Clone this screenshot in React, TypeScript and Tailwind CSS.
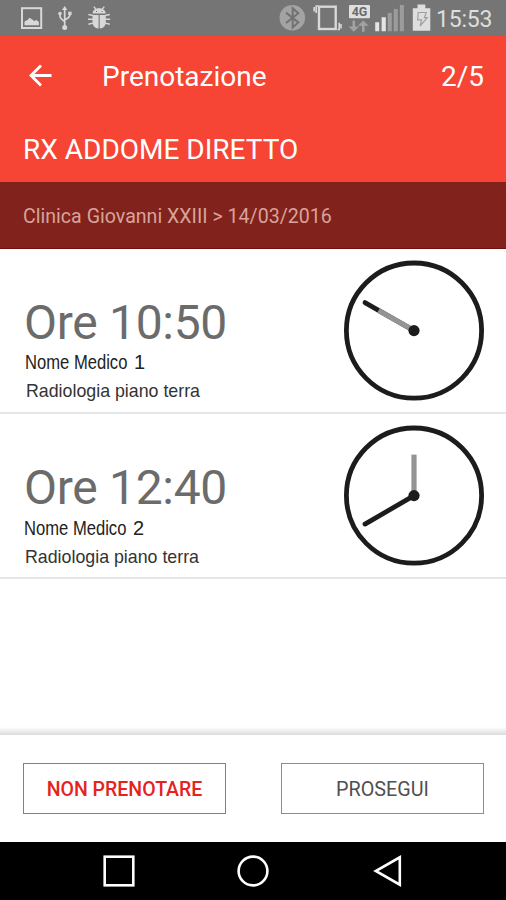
type Appointment = {
  time: string;
  doctor: string;
  number: string;
  place: string;
  detailsClass: string;
  hour: { x: number; y: number };
  minute: { x: number; y: number };
};

const appointments: Appointment[] = [
  {
    time: "Ore 10:50",
    doctor: "Nome Medico",
    number: "1",
    place: "Radiologia piano terra",
    detailsClass: "pl-px",
    hour: { x: 34.5, y: 50 },
    minute: { x: 21, y: 42 },
  },
  {
    time: "Ore 12:40",
    doctor: "Nome Medico",
    number: "2",
    place: "Radiologia piano terra",
    detailsClass: "pt-px",
    hour: { x: 70, y: 29 },
    minute: { x: 21, y: 98.5 },
  },
];

const Clock = ({ hour, minute }: Pick<Appointment, "hour" | "minute">) => (
  <svg className="h-[140px] w-[140px] overflow-visible" viewBox="0 0.4 140 140" fill="none">
    <circle cx="70" cy="70" r="67.6" stroke="#1c1c1c" strokeWidth="4.8" />
    <line x1="70" y1="70" x2={minute.x} y2={minute.y} stroke="#1c1c1c" strokeWidth="4.8" strokeLinecap="round" />
    <line x1="70" y1="70" x2={hour.x} y2={hour.y} stroke="#949494" strokeWidth="5.2" />
    <circle cx="70" cy="70" r="5.6" fill="#1c1c1c" />
  </svg>
);

const StatusBar = () => (
  <div className="flex h-9 items-center bg-[#757575] text-[#d8d8d8]">
    <svg className="h-9 w-[120px]" viewBox="0 0 120 36" fill="none">
      <rect x="22" y="8.2" width="19.2" height="19.8" stroke="currentColor" strokeWidth="2" />
      <path d="M24.5 25.2v-3.7l3-1.5 2-2.2 2.4 1.4 2.3 1.8 2.2-1.1 2.5 2.2v3.1z" fill="currentColor" />
      <path d="M64.7 9v18M60 12.5v3.8q0 2.2 4.7 5.2M69.8 12.5v2.8q0 2.2-5.1 4.7" stroke="currentColor" strokeWidth="1.7" />
      <path d="M64.7 6l2.7 4h-5.4z" fill="currentColor" />
      <circle cx="60" cy="13.5" r="1.8" fill="currentColor" />
      <rect x="68.2" y="11.7" width="3.4" height="3.4" fill="currentColor" />
      <circle cx="64.7" cy="27.4" r="2.5" fill="currentColor" />
      <path d="M92.6 13.6c0-3 2.5-5.3 6.4-5.3s6.7 2.3 6.7 5.3zM92.5 15h6.1v13.4c-4-.2-6.1-3-6.1-6.5zM99.7 15h6.1v6.9c0 3.5-2 6.3-6.1 6.5z" fill="currentColor" />
      <path d="M93.8 6.6l2.4 3M104.3 6.6l-2.4 3M88.4 14.5l4.5 1M88 19.2h5M88.4 24.3l4.6-1.2M109.8 14.5l-4.5 1M110.2 19.2h-5M109.8 24.3l-4.6-1.2" stroke="currentColor" strokeWidth="1.4" />
      <path d="M96 11.5h1M101.5 11.5h1" stroke="#757575" strokeWidth="1.2" />
    </svg>
    <svg className="ml-auto h-9 w-[166px]" viewBox="270 0 166 36" fill="none">
      <circle cx="292.3" cy="17.7" r="12.8" fill="#a3a3a3" />
      <path d="M286 12.6l12.3 9.8-5.6 5V8.3l5.6 4.9-12.3 9.8" stroke="#727272" strokeWidth="2" />
      <rect x="319" y="6.7" width="16.7" height="22.3" stroke="currentColor" strokeWidth="2.4" />
      <path d="M318.5 6h-2.3v7M314.2 7v4.5M337.5 29.5h1.7v-6.8M341 24v4.5" stroke="currentColor" strokeWidth="1.6" />
      <rect x="349" y="5" width="21" height="13.2" rx="1" fill="#dfdfdf" />
      <text x="359.5" y="16" textAnchor="middle" fontSize="12.5" fontWeight="700" fontFamily="Roboto, sans-serif" fill="#6a6a6a">4G</text>
      <path d="M353.8 20.5v6h-4l5.3 5.3 5.3-5.3h-4v-6zM363.3 31.8v-6h-4l5.3-5.3 5.3 5.3h-4v6z" transform="translate(-1.3 0)" fill="#a2a2a2" />
      <path d="M375.2 22.3h4v9h-4zM381.6 17.3h4.2v14h-4.2z" fill="#e4e4e4" />
      <path d="M387.8 13h4v18.3h-4zM393.8 9h4v22.3h-4zM399.9 5h4v26.3h-4z" fill="#9c9c9c" />
      <path d="M417.5 4.5h7.8v3.7h5v22.6h-17.5V8.2h4.7z" fill="#dedede" />
      <path d="M418.3 12.5h8l-2 5.2h3l-7.2 8.3 1.5-6.1h-4z" stroke="#a0a0a0" strokeWidth="1.2" />
    </svg>
    <span className="w-[70px] pt-[3px] text-[23px] leading-9 tracking-[-0.2px] text-[#dedede]">15:53</span>
  </div>
);

const App = () => {
  return (
    <div className="flex h-[900px] w-[506px] flex-col overflow-hidden bg-white font-['Roboto',sans-serif]">
      <StatusBar />

      <header className="h-[146px] bg-[#f64435] text-white">
        <div className="flex h-20 items-center pr-[22px] pl-7 text-[28px]">
          <svg className="h-6 w-6" viewBox="0 0 24 24" fill="none" stroke="white" strokeWidth="2.8">
            <path d="M23.5 11.5H3M13 1.5l-10 10 10 10" />
          </svg>
          <h1 className="ml-[50px] pt-0.5">Prenotazione</h1>
          <span className="ml-auto pt-0.5">2/5</span>
        </div>
        <h2 className="pl-[23px] text-[28px] leading-[68px]">RX ADDOME DIRETTO</h2>
      </header>

      <div className="h-[67px] border-b border-[#721009] bg-[#82221c] pl-[23px] text-[19.6px] leading-[70px] text-[#d7a39b]">
        Clinica Giovanni XXIII &gt; 14/03/2016
      </div>

      <main className="flex-1">
        {appointments.map((item) => (
          <div key={item.time} className="flex h-[165px] justify-between border-b-2 border-[#e6e6e6] pt-3 pr-[22px] pl-6">
            <div className="pt-[34px]">
              <div className="text-[48px] leading-[55px] tracking-[-0.3px] text-[#6b6b6b]">{item.time}</div>
              <div className={item.detailsClass}>
                <div className="flex font-['Liberation_Sans',Arial,sans-serif] text-[20px] leading-6 text-[#222]">
                  <span className="w-[109px] origin-left scale-x-[.83] whitespace-nowrap">{item.doctor}</span>
                  <span>{item.number}</span>
                </div>
                <div className="mt-[3px] ml-px font-['Liberation_Sans',Arial,sans-serif] text-[17.8px] leading-7 text-[#333]">
                  {item.place}
                </div>
              </div>
            </div>
            <Clock hour={item.hour} minute={item.minute} />
          </div>
        ))}
      </main>

      <div className="h-2 bg-linear-to-b from-white to-[#dcdcdc]" />
      <footer className="flex h-[107px] justify-between pt-[28px] pr-[22px] pl-[23px]">
        <button className="h-[51px] w-[203px] pt-0.5 text-[19.5px] font-medium text-[#e5231b] ring-1 ring-[#f0524c] ring-inset">
          NON PRENOTARE
        </button>
        <button className="h-[51px] w-[203px] pt-0.5 text-[19.8px] text-[#505050] ring-1 ring-[#8c8c8c] ring-inset">
          PROSEGUI
        </button>
      </footer>

      <nav className="flex h-[58px] items-center justify-center gap-[102px] bg-black">
        <svg className="h-8 w-8" viewBox="0 0 32 32" fill="none" stroke="white" strokeWidth="2.6">
          <rect x="1.7" y="1.7" width="28.6" height="28.6" />
        </svg>
        <svg className="h-8 w-8" viewBox="0 0 32 32" fill="none" stroke="white" strokeWidth="2.6">
          <circle cx="16" cy="16" r="14.4" />
        </svg>
        <svg className="h-8 w-8" viewBox="0 0 32 32" fill="none" stroke="white" strokeWidth="2.6">
          <path d="M28.8 2.3v27.4L4.8 16z" />
        </svg>
      </nav>
    </div>
  );
};

export default App;
